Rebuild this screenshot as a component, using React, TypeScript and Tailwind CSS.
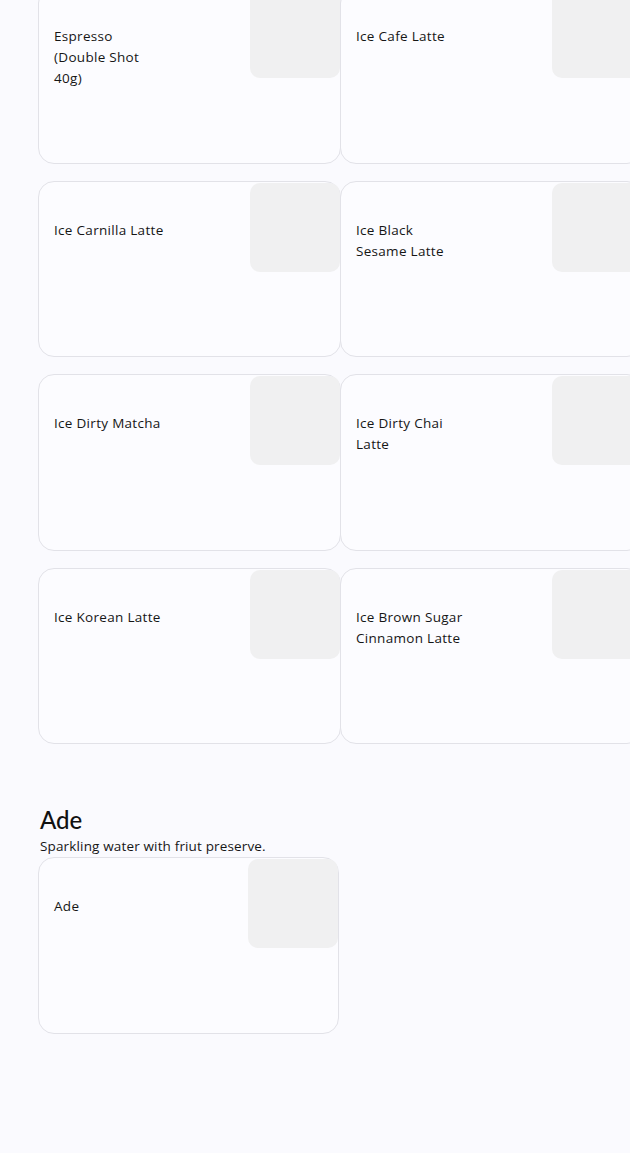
import React from 'react';

type Item = { lines: string[] };

const coffee: Item[] = [
  { lines: ['Espresso', '(Double Shot', '40g)'] },
  { lines: ['Ice Cafe Latte'] },
  { lines: ['Ice Carnilla Latte'] },
  { lines: ['Ice Black', 'Sesame Latte'] },
  { lines: ['Ice Dirty Matcha'] },
  { lines: ['Ice Dirty Chai', 'Latte'] },
  { lines: ['Ice Korean Latte'] },
  { lines: ['Ice Brown Sugar', 'Cinnamon Latte'] },
];

const MenuCard = ({ item, w = 'w-[303px]' }: { item: Item; w?: string }) => (
  <div className={`relative h-[176.5px] ${w} rounded-2xl border border-[#e2e2e8] bg-[#fcfcff]`}>
    <div className="pl-[15px] pt-[38px] text-[13.5px] leading-[21px] tracking-[0.3px] text-[#161616] whitespace-nowrap">
      {item.lines.map((l, i) => (
        <div key={i}>{l}</div>
      ))}
    </div>
    {/* photo placeholder */}
    <div className="absolute right-0 top-px h-[89px] w-[90px] rounded-[10px] bg-[#f0f0f1]" />
  </div>
);

const App = () => {
  return (
    <div
      className="min-h-[1153px] overflow-hidden bg-[#fafafe] pl-[38px]"
      style={{ fontFamily: '"Open Sans", "Noto Sans", sans-serif' }}
    >
      <div className="-mt-[13px] grid grid-cols-[302px_302px] gap-y-[17px]">
        {coffee.map((c, i) => (
          <MenuCard key={i} item={c} />
        ))}
      </div>

      <section className="mt-[60px]">
        <h2 className="pl-[2px] text-[24px] leading-[32px] font-medium text-[#111]" style={{ fontFamily: 'Lato, sans-serif' }}>
          Ade
        </h2>
        <p className="pl-[2px] text-[13.5px] leading-[20px] tracking-[0.15px] text-[#161616]">Sparkling water with friut preserve.</p>
        <div className="mt-px">
          <MenuCard item={{ lines: ['Ade'] }} w="w-[301px]" />
        </div>
      </section>
    </div>
  );
};

export default App;
